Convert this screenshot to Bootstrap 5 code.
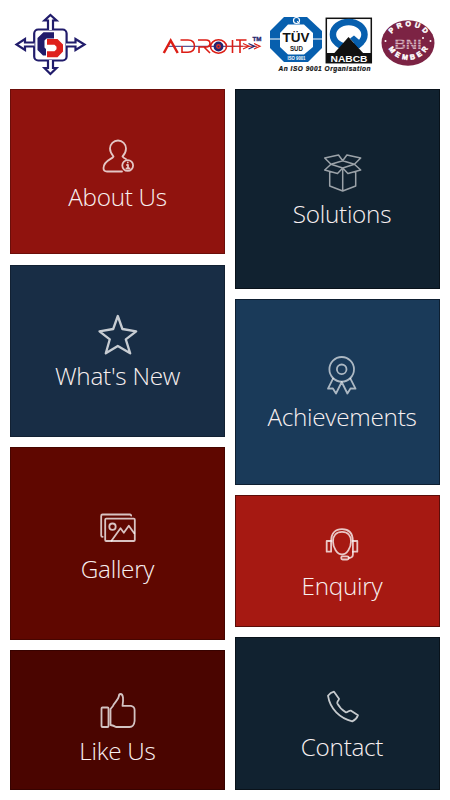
<!DOCTYPE html>
<html lang="en">
<head>
<meta charset="utf-8">
<meta name="viewport" content="width=device-width, initial-scale=1">
<title>Adroit</title>
<link href="https://cdn.jsdelivr.net/npm/bootstrap@5.3.0/dist/css/bootstrap.min.css" rel="stylesheet">
<style>
body{font-family:"Open Sans","Noto Sans",sans-serif;width:450px;height:800px;overflow:hidden}
.brandbar{height:89px;padding:12px 12px 0 14px}
.tiles{padding:0 10px;gap:10px}
.lane-l{width:215px}.lane-r{width:205px}
.tile{color:#f8f0f0;border:1px solid rgba(0,0,0,.25);font-weight:300;font-size:24.3px;letter-spacing:-.27px;line-height:36px;text-decoration:none}
.lane-r .tile{padding-left:9px;border-color:rgba(0,0,0,.45)}
.tile svg{width:44px;height:44px;margin-bottom:3px;fill:none;stroke:#fff;stroke-opacity:.76;stroke-width:1.8;stroke-linejoin:round;stroke-linecap:round;flex:none}
.about{height:165px;padding-top:42px;margin-bottom:11px;background:#90130e}
.news{height:172px;padding-top:45px;margin-bottom:10px;background:#182d45}
.gallery{height:193px;padding-top:56px;margin-bottom:10px;background:#5f0700}
.like{height:140px;padding-top:35px;background:#4a0500}
.solutions{height:200px;padding-top:59px;margin-bottom:10px;background:#112230}
.achieve{height:186px;padding-top:52px;margin-bottom:10px;background:#1a3a59}
.enquiry{height:132px;padding-top:25px;margin-bottom:10px;background:#a61912}
.contact{height:153px;padding-top:44px;background:#112230}
.tile.solutions svg{stroke-opacity:.58;stroke-width:1.5}
.tile.achieve svg{stroke-opacity:.64}
.tile.news svg{stroke-width:2.3}
text{font-family:"Liberation Sans",sans-serif}
</style>
</head>
<body class="bg-white">
<header class="brandbar d-flex align-items-start">
  <svg width="74" height="66" viewBox="14 12 74 66" fill="#fff" stroke="#211c6b" stroke-width="2.2">
    <rect x="34.2" y="29.5" width="32.400" height="31" rx="4"/>
    <path d="M48 30V20.500H44.500L50.400 15L56.500 20.500H53V30M48 60V68H44.500L50.400 74L56.500 68H53V60M34.500 42.500H25V39L16.500 44.500L25 50V46.500H34.500M66 42.500H75.500V39L84.500 44.500L75.500 50V46.500H66"/>
    <path stroke="none" fill="#211c6b" d="M54 32.300H43.500L37.500 38V50L43 55.500H46V49L44.500 47.500V40.500L46.500 38.500H54Z"/>
    <path stroke="none" fill="#df211c" d="M47 39H57.500L63 44.500V51.500L57.500 57.200H47V51.300H54.500L56.500 49.300V46.700L54.500 44.700H47Z"/>
  </svg>
  <svg class="ms-auto" width="104" height="66" viewBox="160 12 104 66">
    <path d="M168 46.300H243" stroke="#30307c"/><path d="M226 46.300H257" stroke="#dc3028"/>
    <g fill="none" stroke="#dc1d15" stroke-width="1.600">
      <path stroke-width="2.500" d="M163.800 53L170.700 40.500L177.700 53"/>
      <path d="M182 46V52.300H188Q194.500 52 194.500 46.300Q194.500 40 188 40H180.500M199 53V47H207Q210 46.500 210 43.500Q210 40 206 40H198M204 47L210 53M232.500 40V53M236 40H246.500M240 40V53"/>
      <ellipse cx="218.500" cy="46.500" rx="8" ry="6.700"/>
      <path stroke-width="1.200" d="M243 43.500L249 46.300L243 49M254 43.500L260 46.300L254 49"/>
    </g>
    <path d="M248.500 43.500L254.500 46.300L248.500 49" fill="none" stroke="#28276f" stroke-width="1.300"/>
    <circle cx="218.500" cy="46.500" r="3.700" fill="#e33126" stroke="#24246f" stroke-width="2.500"/><circle cx="218.500" cy="46.500" r="1" fill="#24246f"/>
    <text x="252.500" y="40.700" font-size="6" font-weight="700" fill="#28276f" stroke="#28276f" stroke-width=".3" textLength="9" lengthAdjust="spacingAndGlyphs">TM</text>
  </svg>
  <svg class="ms-1" width="108" height="66" viewBox="268 12 108 66">
    <path fill="#075fae" d="M284 17H307L322 31V48L308 62H284L270 48V31Z"/>
    <path fill="#fff" d="M288 24.500H304L313 33V47L304 54.500H288L280 47V33Z"/>
    <path d="M270 39H280M313 39H322" stroke="#fff"/>
    <circle cx="296.500" cy="20.500" r="3" fill="none" stroke="#fff" stroke-width="1.200"/><path d="M297 21L299.500 24" stroke="#fff"/>
    <g text-anchor="middle" font-weight="700">
      <text x="296" y="42.300" font-size="12" fill="#111" textLength="27" lengthAdjust="spacingAndGlyphs">TÜV</text>
      <text x="296.500" y="51" font-size="6.500" fill="#222" textLength="13" lengthAdjust="spacingAndGlyphs">SUD</text>
      <text x="296.500" y="59.500" font-size="5" fill="#fff" textLength="18" lengthAdjust="spacingAndGlyphs">ISO 9001</text>
    </g>
    <rect x="326.300" y="18.300" width="45" height="44.400" fill="#fff" stroke="#111" stroke-width="1.500"/>
    <ellipse cx="348.700" cy="34.500" rx="15.800" ry="12.500" fill="#fff" stroke="#075fae" stroke-width="6.500"/>
    <path d="M333.500 54L348.500 37L364 54Z" fill="#111"/>
    <path d="M350 38.500L354 35.500L364 44L359 48.500Z" fill="#075fae"/>
    <rect x="326" y="53" width="46" height="10" fill="#111"/>
    <text x="349" y="61.500" text-anchor="middle" font-size="9.500" font-weight="700" fill="#fff" textLength="37" lengthAdjust="spacingAndGlyphs">NABCB</text>
    <text x="278.500" y="71" font-size="6.500" font-weight="700" font-style="italic" fill="#111" stroke="#111" stroke-width=".2" textLength="92">An ISO 9001 Organisation</text>
  </svg>
  <svg class="ms-1" width="58" height="66" viewBox="380 12 58 66">
    <ellipse cx="408" cy="43" rx="26.500" ry="22.800" fill="#7c2344"/>
    <defs><path id="arcTop" d="M389 42A19.500 15.800 0 0 1 428 42"/><path id="arcBottom" d="M386.500 42A22 21 0 0 0 430 42"/></defs>
    <g fill="#fff" font-size="7" font-weight="700" text-anchor="middle" stroke="#fff" stroke-width=".5">
      <text textLength="38"><textPath href="#arcTop" startOffset="50%">PROUD</textPath></text>
      <text textLength="47"><textPath href="#arcBottom" startOffset="50%">MEMBER</textPath></text>
    </g>
    <text x="394.500" y="48.500" font-size="15.500" font-weight="700" fill="#d5b0bd" textLength="27" lengthAdjust="spacingAndGlyphs">BNI</text>
    <path d="M394 39.500H422M394 42H422M394 44.500H422M394 47H422" stroke="#7c2344" stroke-width=".7"/>
    <g fill="#fff"><circle cx="423" cy="38" r="1"/><circle cx="385.500" cy="41" r="1"/><circle cx="430.500" cy="41" r="1"/></g>
  </svg>
</header>
<main class="tiles d-flex">
  <div class="lane-l d-flex flex-column">
    <a class="tile about d-flex flex-column align-items-center"><svg viewBox="0 0 44 44"><path d="M30 27Q27.500 26 26.500 24.500C29 22 30 19 30 16.500A8 8 0 0 0 14 16.500C14 19.500 15.500 22 17.500 24.500C16 27.500 8 28 7.500 36Q7.500 39.500 11 39.500H26"/><circle cx="31.700" cy="33.500" r="5.400"/><path d="M31 33H32V36.500M30.500 36.500H33.500M31.800 30.500V30.600"/></svg>About Us</a>
    <a class="tile news d-flex flex-column align-items-center"><svg viewBox="0 0 44 44"><path d="M21.800 5L26.400 18L40.200 20.300L29.800 28.300L34.200 42.300L21.800 35L9.800 42.300L13.800 28.300L3.500 20.300L17.200 18Z"/></svg>What's New</a>
    <a class="tile gallery d-flex flex-column align-items-center"><svg viewBox="0 0 44 44"><rect x="9.200" y="14.700" width="29.600" height="22.300" rx="1"/><path d="M35.200 11.700Q35 10.500 34 10.500H6.500Q5.200 10.500 5.200 12V31.500Q5.200 32.800 6.700 32.800"/><circle cx="16.500" cy="22.700" r="3.200"/><path d="M15.500 36.700L24.500 24.300L27.800 28.700L32.800 21.700L38.200 29.300"/></svg>Gallery</a>
    <a class="tile like d-flex flex-column align-items-center"><svg viewBox="0 0 44 44"><rect x="5.500" y="21.500" width="7" height="19.500" rx="1"/><path d="M14.500 23L17 20C18.500 16 22 14.500 22.800 10.500Q23 8 24.500 8C27.500 8 27.500 13.500 26.500 19.800H35Q38.600 20.500 38.600 24V35Q38 41 33.500 41H20Q17.500 39.500 14.500 39Z"/></svg>Like Us</a>
  </div>
  <div class="lane-r d-flex flex-column">
    <a class="tile solutions d-flex flex-column align-items-center"><svg viewBox="0 0 44 44"><path d="M11 15.300L4.700 9L18.500 6L22.700 11.700ZM34.400 15.300L40.700 9L26.900 6L22.700 11.700ZM11 15.300L4.700 21L17.500 24.500L22.700 19ZM34.400 15.300L40.700 21L27.900 24.500L22.700 19ZM9.700 22.500V37L22.700 42L35.700 37V22.500M22.700 19V42"/></svg>Solutions</a>
    <a class="tile achieve d-flex flex-column align-items-center"><svg viewBox="0 0 44 44"><circle cx="21.700" cy="17.300" r="12.300"/><circle cx="21.700" cy="17.300" r="4.800"/><path d="M13 26.700L8 36.700L12.900 36.500L16 41.500L21.700 30L27.400 41.500L30.500 36.500L35.500 36.700L30.400 26.700"/></svg>Achievements</a>
    <a class="tile enquiry d-flex flex-column align-items-center"><svg viewBox="0 0 44 44"><path d="M22 10.800C27.500 10.800 31 14.500 31 20.500C31 26.500 27 33.500 22 33.500C17 33.500 13 26.500 13 20.500C13 14.500 16.500 10.800 22 10.800ZM11.200 20C11.200 12 15.500 8.200 22 8.200S32.800 12 32.800 20"/><rect x="6.700" y="20" width="4.400" height="10.700"/><rect x="32.900" y="20" width="4.400" height="10.700"/><rect x="21.200" y="35.300" width="7.500" height="3.200" rx="1.500"/><path d="M32.900 31V34Q32.500 37 29 37"/></svg>Enquiry</a>
    <a class="tile contact d-flex flex-column align-items-center"><svg viewBox="0 0 44 44"><path d="M8 13.700Q10.500 10.500 14 9.700L19 16.700C19 18.500 16.700 19.500 17.300 21.300Q20 26.500 25.700 30.300C27.500 30.700 28.500 28.500 30.700 28.600L38 33.300Q36.500 37.500 32.300 39.300C20 36.500 10 27 8 13.700Z"/></svg>Contact</a>
  </div>
</main>
<script src="https://cdn.jsdelivr.net/npm/bootstrap@5.3.0/dist/js/bootstrap.bundle.min.js"></script>
</body>
</html>
